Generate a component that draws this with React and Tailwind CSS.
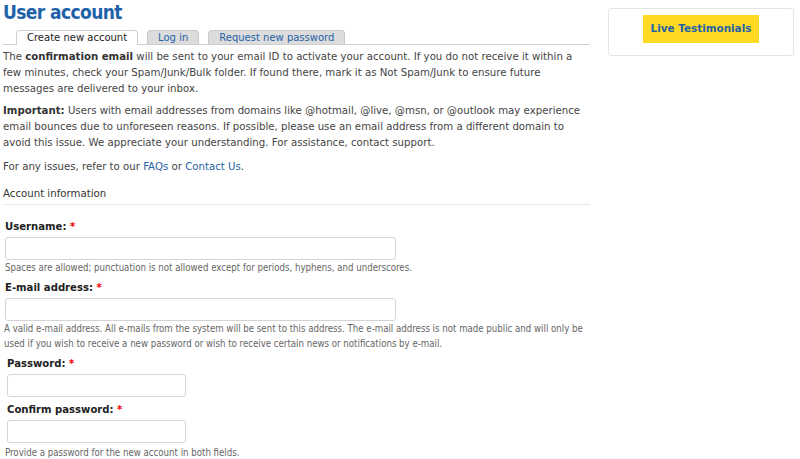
const Label = ({ children, className = "" }) => (
  <label className={`block font-bold text-[10.1px] text-[#222] leading-[14px] ${className}`}>
    {children} <span className="text-[#e00]">*</span>
  </label>
)

const Field = ({ width, className = "" }) => (
  <input
    type="text"
    className={`block h-[23px] ${width} rounded-[3px] border border-[#d4d4d4] bg-white ${className}`}
  />
)

const Help = ({ children, className = "" }) => (
  <p className={`text-[9.6px] leading-[15px] text-[#666] font-['DejaVu_Sans_Condensed','DejaVu_Sans',sans-serif] ${className}`}>
    {children}
  </p>
)

export default function App() {
  return (
    <div className="flex h-[459px] w-[800px] bg-white font-['DejaVu_Sans','Verdana',sans-serif] text-[#444] overflow-hidden">
      <main className="w-[590px] pl-[3px]">
        <h1 className="text-[19px] font-bold leading-[24px] tracking-[-0.6px] text-[#1f62a8] font-['DejaVu_Sans_Condensed','DejaVu_Sans',sans-serif]">
          User account
        </h1>

        <div className="mt-[6px] flex items-end gap-[9px] border-b border-[#cfcfcf] pl-[13px] text-[10px] leading-[12px]">
          <span className="-mb-px rounded-t-[4px] border border-b-0 border-[#cfcfcf] bg-white px-[10px] pt-[1px] pb-[1px] text-[#222]">
            Create new account
          </span>
          <a className="rounded-t-[4px] border border-b-0 border-[#c8c8c8] bg-[#dcdcdc] px-[10px] pt-[1px] text-[#1f62a8]">
            Log in
          </a>
          <a className="rounded-t-[4px] border border-b-0 border-[#c8c8c8] bg-[#dcdcdc] px-[10px] pt-[1px] text-[#1f62a8]">
            Request new password
          </a>
        </div>

        <div className="mt-[4px] text-[10.2px] leading-[16px]">
          <p>
            The <b className="text-[#333]">confirmation email</b> will be sent to your email ID to activate your
            account. If you do not receive it within a few minutes, check your Spam/Junk/Bulk folder. If found there,
            mark it as Not Spam/Junk to ensure future messages are delivered to your inbox.
          </p>
          <p className="mt-[6px]">
            <b className="text-[#333]">Important:</b> Users with email addresses from domains like @hotmail, @live,
            @msn, or @outlook may experience email bounces due to unforeseen reasons. If possible, please use an email
            address from a different domain to avoid this issue. We appreciate your understanding. For assistance,
            contact support.
          </p>
          <p className="mt-[8px]">
            For any issues, refer to our <a className="text-[#1f62a8]">FAQs</a> or{" "}
            <a className="text-[#1f62a8]">Contact Us</a>.
          </p>
          <p className="mt-[11px] border-b border-[#e6e6e6] pb-[2px] text-[#333]">Account information</p>
        </div>

        <div className="pl-[2px]">
          <Label className="mt-[15px]">Username:</Label>
          <Field width="w-[391px]" className="mt-[3px]" />
          <Help>Spaces are allowed; punctuation is not allowed except for periods, hyphens, and underscores.</Help>

          <Label className="mt-[6px]">E-mail address:</Label>
          <Field width="w-[391px]" className="mt-[3px]" />
          <Help className="-ml-[1px]">
            A valid e-mail address. All e-mails from the system will be sent to this address. The e-mail address is
            not made public and will only be used if you wish to receive a new password or wish to receive certain
            news or notifications by e-mail.
          </Help>

          <div className="pl-[2px]">
            <Label className="mt-[6px]">Password:</Label>
            <Field width="w-[179px]" className="mt-[3px]" />
            <Label className="mt-[6px]">Confirm password:</Label>
            <Field width="w-[179px]" className="mt-[3px] h-[22px]" />
          </div>
          <Help className="mt-[2px]">Provide a password for the new account in both fields.</Help>
        </div>
      </main>

      <aside className="ml-[18px] mt-[8px] flex h-[48px] w-[186px] justify-center rounded-[3px] border border-[#e4e4e4] pt-[6px]">
        <a className="flex h-[28px] w-[116px] items-center justify-center bg-[#fdd922] text-[10.4px] font-bold text-[#1f62a8]">
          Live Testimonials
        </a>
      </aside>
    </div>
  )
}
